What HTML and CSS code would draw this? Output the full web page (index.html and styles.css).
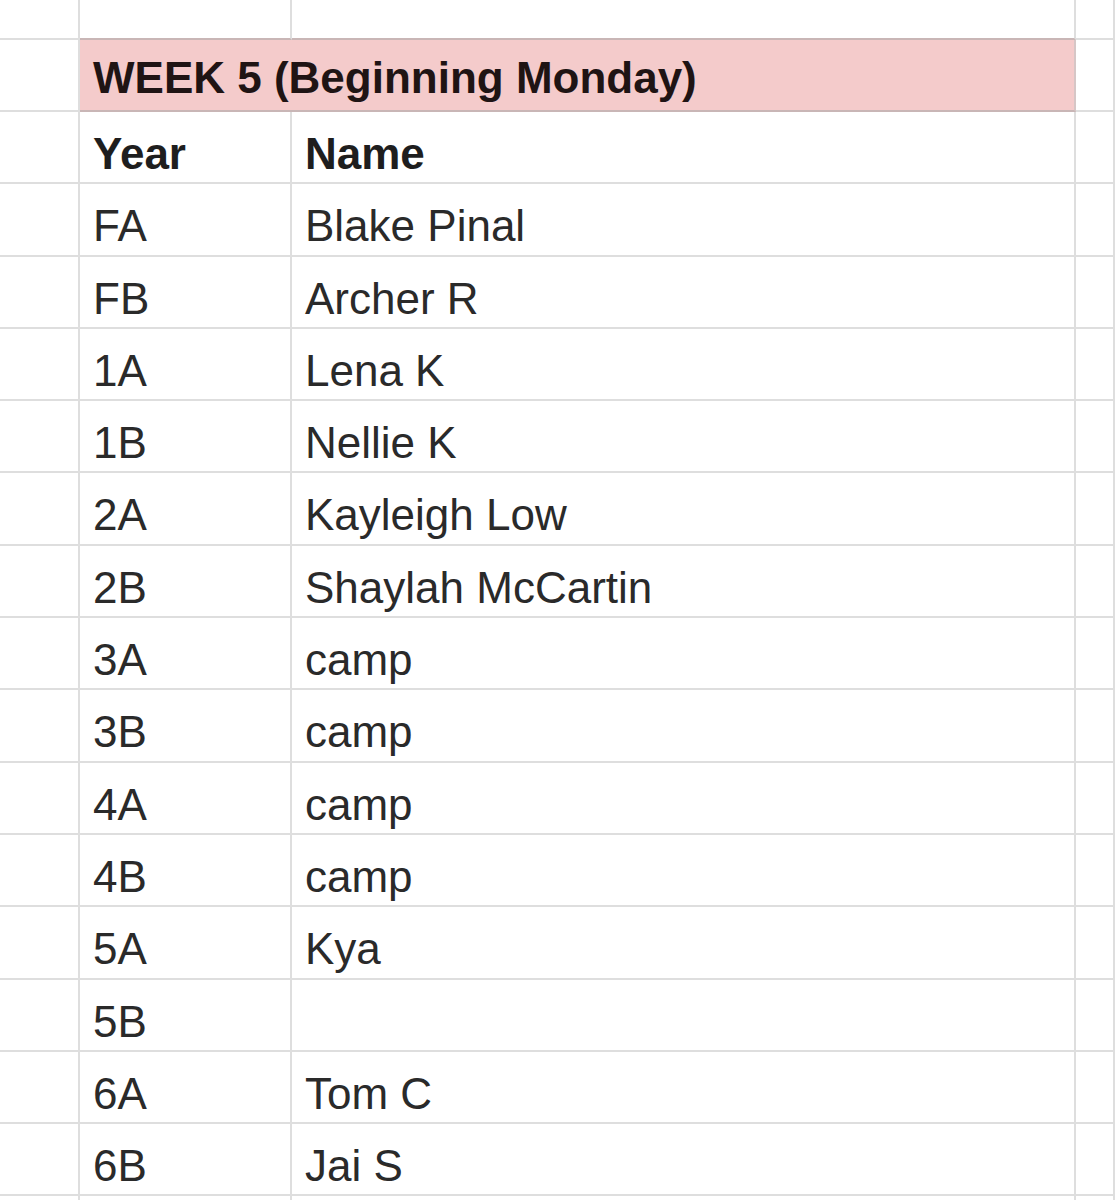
FILE: index.html
```html
<!DOCTYPE html>
<html lang="en">
<head>
<meta charset="utf-8">
<title>Week 5</title>
<link rel="stylesheet" href="styles.css">
</head>
<body>
<div class="sheet">
  <div class="cell top"></div><div class="cell top"></div><div class="cell top"></div><div class="cell top"></div>

  <div class="cell head-row"></div>
  <div class="cell title">WEEK 5 (Beginning Monday)</div>
  <div class="cell head-row"></div>

  <div class="cell"></div><div class="cell txt bold">Year</div><div class="cell txt bold">Name</div><div class="cell"></div>
  <div class="cell"></div><div class="cell txt">FA</div><div class="cell txt">Blake Pinal</div><div class="cell"></div>
  <div class="cell"></div><div class="cell txt">FB</div><div class="cell txt">Archer R</div><div class="cell"></div>
  <div class="cell"></div><div class="cell txt">1A</div><div class="cell txt">Lena K</div><div class="cell"></div>
  <div class="cell"></div><div class="cell txt">1B</div><div class="cell txt">Nellie K</div><div class="cell"></div>
  <div class="cell"></div><div class="cell txt">2A</div><div class="cell txt">Kayleigh Low</div><div class="cell"></div>
  <div class="cell"></div><div class="cell txt">2B</div><div class="cell txt">Shaylah McCartin</div><div class="cell"></div>
  <div class="cell"></div><div class="cell txt">3A</div><div class="cell txt">camp</div><div class="cell"></div>
  <div class="cell"></div><div class="cell txt">3B</div><div class="cell txt">camp</div><div class="cell"></div>
  <div class="cell"></div><div class="cell txt">4A</div><div class="cell txt">camp</div><div class="cell"></div>
  <div class="cell"></div><div class="cell txt">4B</div><div class="cell txt">camp</div><div class="cell"></div>
  <div class="cell"></div><div class="cell txt">5A</div><div class="cell txt">Kya</div><div class="cell"></div>
  <div class="cell"></div><div class="cell txt">5B</div><div class="cell txt"></div><div class="cell"></div>
  <div class="cell"></div><div class="cell txt">6A</div><div class="cell txt">Tom C</div><div class="cell"></div>
  <div class="cell"></div><div class="cell txt">6B</div><div class="cell txt">Jai S</div><div class="cell"></div>
  <div class="cell"></div><div class="cell txt"></div><div class="cell txt"></div><div class="cell"></div>
</div>
</body>
</html>
```
FILE: styles.css
```css
html, body {
  margin: 0;
  padding: 0;
  background: #ffffff;
}

body {
  font-family: "Liberation Sans", Arial, sans-serif;
  color: #222222;
  overflow: hidden;
}

.sheet {
  display: grid;
  grid-template-columns: 80px 212px 784px 39px;
  grid-template-rows: 40px 72px;
  grid-auto-rows: 72.3px;
  width: 1115px;
  height: 1200px;
  overflow: hidden;
}

.cell {
  box-sizing: border-box;
  border-right: 2px solid #dedede;
  border-bottom: 2px solid #dedede;
  font-size: 44px;
  line-height: 49px;
  white-space: nowrap;
  overflow: hidden;
}

.top:nth-child(2),
.top:nth-child(3) {
  border-bottom-color: #c9b6b6;
}

.title {
  grid-column: 2 / span 2;
  background: #f4cbcb;
  border-bottom: 2px solid #c9b6b6;
  border-right-color: #d6c6c6;
  font-weight: bold;
  color: #1f1414;
  padding: 13px 0 0 13px;
}

.txt {
  padding: 17px 0 0 13px;
  color: #2a2a2a;
}

.bold {
  font-weight: bold;
  color: #1e1e1e;
}
```
